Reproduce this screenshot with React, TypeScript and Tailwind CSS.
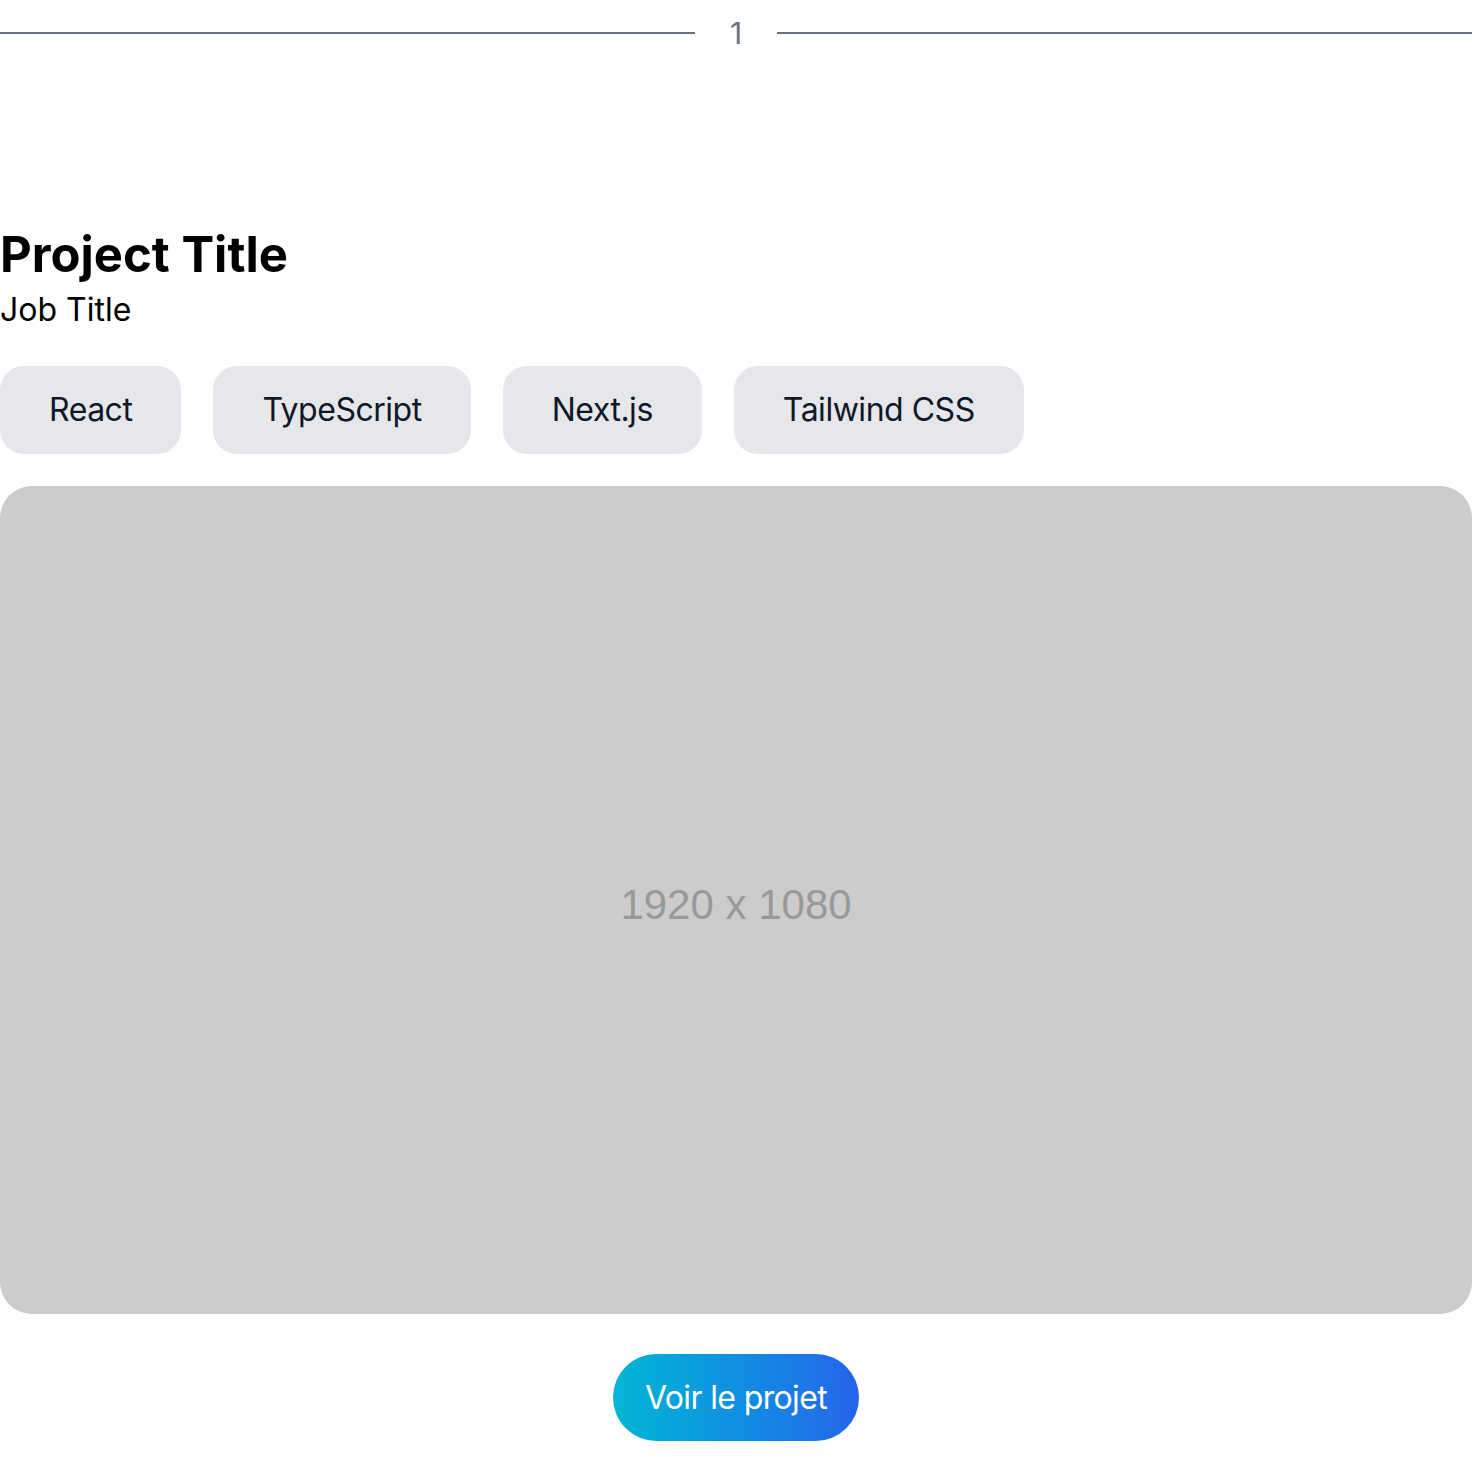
const tags = ["React", "TypeScript", "Next.js", "Tailwind CSS"];

const ProjectPage = () => {
  return (
    <div className="min-h-screen bg-white font-['Inter',sans-serif]">
      {/* divider with number */}
      <div className="flex items-center h-[66px]">
        <div className="flex-1 h-[2px] bg-gray-500" />
        <span className="mx-[35px] text-[30px] leading-none text-gray-500">1</span>
        <div className="flex-1 h-[2px] bg-gray-500" />
      </div>

      <main className="pt-[160px]">
        {/* header */}
        <h1 className="text-[49px] leading-[58px] font-bold text-black mb-2">
          Project Title
        </h1>
        <p className="text-[32px] leading-[36px] text-black">Job Title</p>

        {/* tags */}
        <div className="flex gap-8 mt-[38px]">
          {tags.map((tag) => (
            <span
              key={tag}
              className="px-[49px] h-[88px] flex items-center rounded-3xl bg-gray-200 text-[32px] tracking-[-0.015em] text-gray-900"
            >
              {tag}
            </span>
          ))}
        </div>

        {/* placeholder image */}
        <div className="mt-8 aspect-video w-full rounded-[32px] bg-[#cccccc] flex items-center justify-center">
          <span className="pt-2 font-['Liberation_Sans',Arial,sans-serif] text-[42px] text-[#999999]">
            1920 x 1080
          </span>
        </div>

        <div className="flex justify-center mt-10">
          <button className="h-[87px] px-8 rounded-full bg-gradient-to-r from-[#06b6d4] to-[#2563eb] text-white text-[32px] tracking-[-0.02em]">
            Voir le projet
          </button>
        </div>
      </main>
    </div>
  );
};

export default ProjectPage;
